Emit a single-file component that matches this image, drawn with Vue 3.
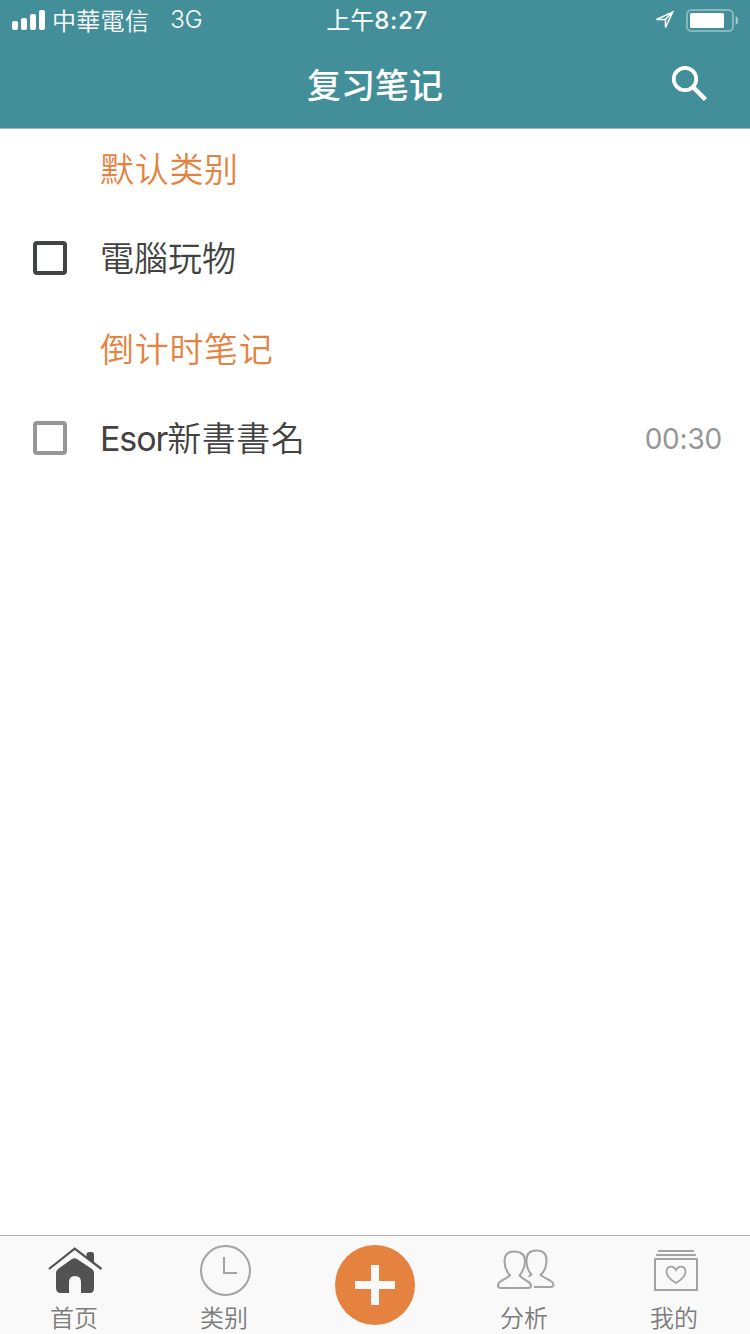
<script setup>
const sections = [
  { title: '默认类别', notes: [{ latin: '', name: '電腦玩物', time: '', muted: false }] },
  { title: '倒计时笔记', notes: [{ latin: 'Esor', name: '新書書名', time: '00:30', muted: true }] }
]
</script>

<template>
  <div class="screen">
    <header class="header">
      <div class="status">
        <div class="carrier">
          <svg class="signal" width="34" height="20" viewBox="0 0 34 20" fill="#fff">
            <rect x="0" y="11" width="6" height="9" rx="2" />
            <rect x="9" y="8" width="6" height="12" rx="2" />
            <rect x="18" y="4" width="6" height="16" rx="2" />
            <rect x="27" y="0" width="6" height="20" rx="2" />
          </svg>
          <span class="operator">中華電信</span>
          <span class="network">3G</span>
        </div>
        <div class="clock">上午<span class="digits">8:27</span></div>
        <div class="power">
          <svg width="84" height="24" viewBox="0 0 84 24">
            <path d="M2.500 11.500 18.700 4 11.500 19.500V11.300Z M11.500 11.300 18.700 4" fill="none" stroke="#fff" stroke-width="1.500" />
            <rect x="33" y="2" width="46" height="21" rx="4.500" fill="none" stroke="#fff" stroke-opacity=".36" stroke-width="2" />
            <rect x="36" y="5" width="34" height="15" rx="1.500" fill="#fff" />
            <path d="M82 8.500Q86 12.500 82 16.500Z" fill="#fff" fill-opacity=".45" stroke="#fff" stroke-opacity=".3" />
          </svg>
        </div>
      </div>
      <div class="navbar">
        <h1 class="title">复习笔记</h1>
        <svg class="search" width="38" height="38" viewBox="0 0 38 38" fill="none" stroke="#fff">
          <circle cx="15" cy="14" r="11.200" stroke-width="3.800" />
          <path d="M23.500 22.500 35.500 34.500" stroke-width="4.500" />
        </svg>
      </div>
    </header>

    <main class="list">
      <section v-for="s in sections" :key="s.title">
        <h2 class="category">{{ s.title }}</h2>
        <div v-for="n in s.notes" :key="n.name" class="note">
          <span class="checkbox" :class="{ muted: n.muted }"></span>
          <span class="name" :class="{ mixed: n.latin }"><span v-if="n.latin" class="latin">{{ n.latin }}</span>{{ n.name }}</span>
          <span class="time">{{ n.time }}</span>
        </div>
      </section>
    </main>

    <nav class="tabs">
      <div class="tab">
        <svg class="icon" width="60" height="56" viewBox="0 0 60 56">
          <path d="M41.500 13V9.500Q41.500 7 44 7H46.500Q49 7 49 9.500V19Z" fill="#525252" />
          <path d="M4 24 29.700 3.700 56.500 24" fill="none" stroke="#525252" stroke-width="2.200" />
          <path d="M11 28Q11 26 13 24L27 14Q29.500 12.500 32 14L47 24Q49 26 49 28V43Q49 48 45 48H36V37Q36 31 30 31T24 37V48H16Q11 48 11 43Z" fill="#525252" />
        </svg>
        <span class="label">首页</span>
      </div>
      <div class="tab">
        <svg class="icon" width="60" height="56" viewBox="0 0 60 56" fill="none" stroke="#a3a3a3" stroke-width="2">
          <circle cx="30.500" cy="25.500" r="24.500" />
          <path d="M29 12V28H42" />
        </svg>
        <span class="label">类别</span>
      </div>
      <div class="tab">
        <svg class="add" width="80" height="80" viewBox="0 0 80 80">
          <circle cx="40" cy="40" r="40" fill="#e5823f" />
          <path d="M36 20H44V36H60V44H44V60H36V44H20V36H36Z" fill="#f9f9f9" />
        </svg>
      </div>
      <div class="tab">
        <svg class="icon" width="60" height="56" viewBox="0 0 60 56" fill="none" stroke="#a3a3a3" stroke-width="2" stroke-linejoin="round">
          <path d="M19 6.500C12 6.500 9.500 11 9.500 16C9.500 22 11 26 15 30.500Q10 34 6 36Q3 38 3 40.500Q3 43 6 43H33Q36 43 36 41Q36 38 32 36Q28 34 24.500 30.500C29 25 30 21 30 16C30 10 26 6.500 19 6.500Z" />
          <path d="M33.500 31.500 36.500 29.500C33 26 31.500 21 31.500 15C31.500 9 35 5.500 41.500 5.500C48 5.500 51.500 9 51.500 15C51.500 21 50 26 45.500 30Q50 33 55 35.500Q58.500 37.500 58.500 40Q58.500 42 55 42H39" />
        </svg>
        <span class="label">分析</span>
      </div>
      <div class="tab">
        <svg class="icon" width="60" height="56" viewBox="0 0 60 56" fill="none" stroke="#a3a3a3" stroke-width="2">
          <path d="M13 6H49M11 10H51" />
          <rect x="10" y="14" width="42" height="31" />
          <path d="M31 38C26 35 21.500 31 21.500 26.500C21.500 20.500 28.500 20 31 25C33.500 20 40.500 20.500 40.500 26.500C40.500 31 36 35 31 38Z" stroke-width="1.800" />
        </svg>
        <span class="label">我的</span>
      </div>
    </nav>
  </div>
</template>

<style>
body {
  margin: 0;
}
</style>

<style scoped>
.screen {
  width: 750px;
  height: 1334px;
  display: flex;
  flex-direction: column;
  background: #fff;
  font-family: Inter, "Noto Sans CJK SC", sans-serif;
  font-weight: 350;
  overflow: hidden;
}
.header {
  height: 128px;
  flex: none;
  background: #428f9a;
  border-bottom: 1px solid #a9b0b2;
  color: #fff;
}
.status {
  height: 40px;
  display: grid;
  grid-template-columns: 300px 154px 1fr;
  align-items: center;
  font-size: 24px;
  line-height: 40px;
}
.carrier {
  height: 40px;
  display: flex;
  align-items: center;
  padding-left: 12px;
}
.operator {
  margin-left: 6px;
  font-family: "Noto Sans CJK TC", sans-serif;
  letter-spacing: 0.3px;
}
.network {
  margin-left: 21px;
  font-weight: 350;
}
.clock {
  height: 40px;
  line-height: 42px;
  text-align: center;
  font-weight: 400;
  white-space: nowrap;
}
.digits {
  font-weight: 500;
  letter-spacing: 0.7px;
}
.power {
  height: 40px;
  display: flex;
  align-items: center;
  justify-content: flex-end;
  padding-right: 12px;
}
.navbar {
  height: 88px;
  display: grid;
  grid-template-columns: 1fr 200px 1fr;
  align-items: center;
}
.title {
  grid-column: 2;
  margin: 0;
  padding-top: 3px;
  text-align: center;
  font-size: 34px;
  line-height: 85px;
  font-weight: 500;
}
.search {
  justify-self: end;
  margin-right: 42px;
}
.list {
  flex: 1;
}
.category {
  margin: 0;
  padding-left: 100px;
  height: 90px;
  line-height: 82px;
  font-size: 34px;
  font-weight: 350;
  letter-spacing: 0.7px;
  color: #e5823f;
}
.note {
  height: 90px;
  display: flex;
  align-items: center;
  padding: 0 28px 0 33px;
  box-sizing: border-box;
}
.checkbox {
  width: 34px;
  height: 34px;
  box-sizing: border-box;
  border: 4px solid #424444;
  border-radius: 4px;
  margin: 0 33px 13px 0;
}
.checkbox.muted {
  border-color: #969696;
}
.name {
  flex: 1;
  padding-bottom: 10px;
  font-family: Inter, "Noto Sans CJK TC", sans-serif;
  font-size: 34px;
  line-height: 80px;
  color: #424242;
}
.name.mixed {
  letter-spacing: 0.6px;
}
.latin {
  font-weight: 400;
  letter-spacing: -1.1px;
}
.time {
  padding-bottom: 11px;
  font-size: 28px;
  line-height: 80px;
  font-weight: 400;
  letter-spacing: -0.2px;
  color: #969696;
}
.tabs {
  height: 99px;
  flex: none;
  box-sizing: border-box;
  border-top: 1px solid #b2b2b2;
  background: #f9f9f9;
  display: grid;
  grid-template-columns: repeat(5, 1fr);
}
.tab {
  display: flex;
  flex-direction: column;
  align-items: center;
  padding-top: 9px;
}
.icon {
  flex: none;
}
.label {
  margin-top: 1px;
  padding-right: 2px;
  font-size: 24px;
  line-height: 34px;
  color: #7c7c7c;
}
</style>
